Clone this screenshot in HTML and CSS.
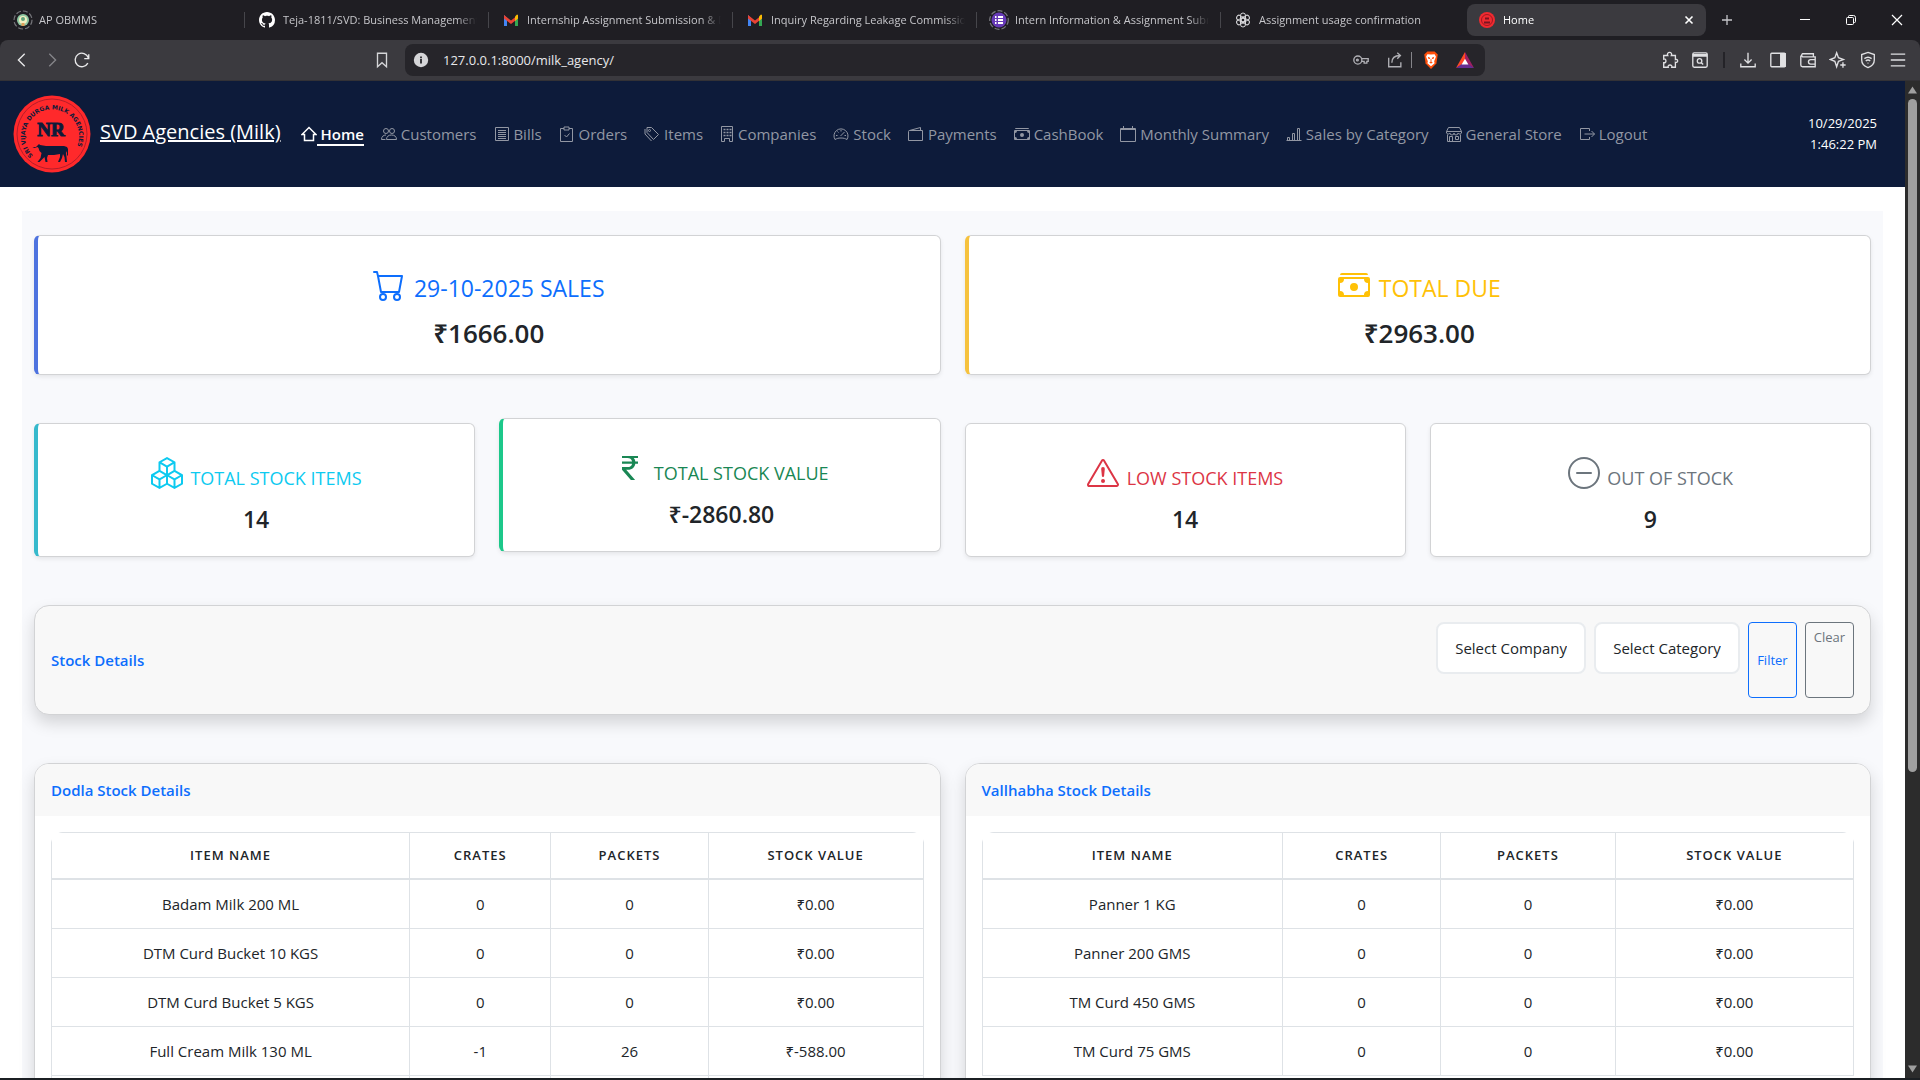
FILE: index.html
```html
<!DOCTYPE html>
<html lang="en">
<head>
<meta charset="utf-8">
<meta name="viewport" content="width=device-width, initial-scale=1">
<title>Home</title>
<link rel="stylesheet" href="styles.css">
</head>
<body>
<div class="tabstrip">
  <div class="tab">
    <svg class="favicon" viewBox="0 0 20 20"><circle cx="10" cy="10" r="9" fill="none" stroke="#77777c" stroke-width="1.2" stroke-dasharray="5 2"/><circle cx="10" cy="10" r="6" fill="#8fc9a3"/><circle cx="10" cy="10" r="4" fill="#f3efc0"/><circle cx="10" cy="9" r="2" fill="#5da37b"/><path d="M8.500 13h3v3h-3z" fill="#e0a05a"/></svg>
    <span class="tab-title">AP OBMMS</span>
  </div>
  <div class="tab">
    <svg class="favicon" viewBox="-2 -2 20 20"><path fill="#fff" d="M8 0C3.58 0 0 3.58 0 8c0 3.540 2.290 6.530 5.470 7.590.4.07.55-.17.55-.38 0-.19-.01-.82-.01-1.490-2.010.37-2.530-.49-2.690-.94-.09-.23-.48-.94-.82-1.130-.28-.15-.68-.52-.01-.53.63-.01 1.080.58 1.230.82.72 1.210 1.870.87 2.330.66.07-.52.28-.87.51-1.070-1.780-.2-3.640-.89-3.640-3.950 0-.87.31-1.590.82-2.150-.08-.2-.36-1.020.08-2.120 0 0 .67-.21 2.200.82.64-.18 1.320-.27 2-.27s1.360.09 2 .27c1.530-1.040 2.200-.82 2.200-.82.44 1.100.16 1.920.08 2.120.51.56.82 1.270.82 2.150 0 3.070-1.870 3.750-3.650 3.950.29.25.54.73.54 1.480 0 1.070-.01 1.930-.01 2.200 0 .21.15.46.55.38A8.010 8.010 0 0 0 16 8c0-4.420-3.580-8-8-8"/></svg>
    <span class="tab-title">Teja-1811/SVD: Business Management System</span>
  </div>
  <div class="tab">
    <svg class="favicon" viewBox="0 0 20 20"><path d="M3 5v11h3V8z" fill="#4285f4"/><path d="M17 5v11h-3V8z" fill="#34a853"/><path d="M3 5l7 5.500L17 5v3.500l-7 5.500-7-5.500z" fill="#ea4335"/><path d="M14 6.500 16 4.500l1 .5v3.500L14 11z" fill="#fbbc04"/></svg>
    <span class="tab-title">Internship Assignment Submission &amp; Details</span>
  </div>
  <div class="tab">
    <svg class="favicon" viewBox="0 0 20 20"><path d="M3 5v11h3V8z" fill="#4285f4"/><path d="M17 5v11h-3V8z" fill="#34a853"/><path d="M3 5l7 5.500L17 5v3.500l-7 5.500-7-5.500z" fill="#ea4335"/><path d="M14 6.500 16 4.500l1 .5v3.500L14 11z" fill="#fbbc04"/></svg>
    <span class="tab-title">Inquiry Regarding Leakage Commission</span>
  </div>
  <div class="tab">
    <svg class="favicon" viewBox="0 0 20 20"><circle cx="10" cy="10" r="9.300" fill="none" stroke="#77777c" stroke-width="1.200" stroke-dasharray="5 2"/><circle cx="10" cy="10" r="7.500" fill="#673ab7"/><path d="M6 7h1.500M9 7h5M6 10h1.500M9 10h5M6 13h1.500M9 13h5" stroke="#fff" stroke-width="1.800"/></svg>
    <span class="tab-title">Intern Information &amp; Assignment Submission</span>
  </div>
  <div class="tab">
    <svg class="favicon" viewBox="0 0 20 20" fill="none" stroke="#d5d5d8" stroke-width="1"><rect x="7.500" y="3" width="5" height="9" rx="2.500"/><rect x="7.500" y="3" width="5" height="9" rx="2.500" transform="rotate(60 10 10)"/><rect x="7.500" y="3" width="5" height="9" rx="2.500" transform="rotate(120 10 10)"/><rect x="7.500" y="3" width="5" height="9" rx="2.500" transform="rotate(180 10 10)"/><rect x="7.500" y="3" width="5" height="9" rx="2.500" transform="rotate(240 10 10)"/><rect x="7.500" y="3" width="5" height="9" rx="2.500" transform="rotate(300 10 10)"/></svg>
    <span class="tab-title">Assignment usage confirmation</span>
  </div>
  <div class="tab tab-active">
    <svg class="favicon" viewBox="0 0 20 20"><circle cx="10" cy="10" r="8" fill="#f02a30"/><circle cx="10" cy="10" r="5.500" fill="none" stroke="#a01822" stroke-width="1"/><path d="M8 7.500h4v2H8zM7 11.500h6v2H7z" fill="#7a1420"/></svg>
    <span class="tab-title">Home</span>
    <button class="icon-button tab-close" type="button" aria-label="Close tab"><svg viewBox="0 0 10 10"><path d="M1.500 1.500l7 7M8.500 1.500l-7 7" stroke="currentColor" stroke-width="1.600"/></svg></button>
  </div>
  <button class="icon-button tab-new" type="button" aria-label="New tab"><svg viewBox="0 0 12 12"><path d="M6 1v10M1 6h10" stroke="currentColor" stroke-width="1.300"/></svg></button>
  <div class="window-controls">
    <button class="icon-button" type="button" aria-label="Minimise"><svg viewBox="0 0 12 12"><path d="M1 5.500h10" stroke="currentColor"/></svg></button>
    <button class="icon-button" type="button" aria-label="Restore"><svg viewBox="0 0 12 12" fill="none" stroke="currentColor"><rect x="1.500" y="3.500" width="7" height="7" rx="1"/><path d="M3.500 3.500v-1a1 1 0 0 1 1-1h4a2 2 0 0 1 2 2v4a1 1 0 0 1-1 1h-1"/></svg></button>
    <button class="icon-button" type="button" aria-label="Close window"><svg viewBox="0 0 12 12"><path d="M1 1l10 10M11 1L1 11" stroke="currentColor" stroke-width="1.200"/></svg></button>
  </div>
</div>

<div class="toolbar">
  <div class="toolbar-nav">
    <button class="icon-button" type="button" aria-label="Back"><svg viewBox="0 0 20 20"><path d="M13 3 6 10l7 7" stroke="#e8e8ea"/></svg></button>
    <button class="icon-button" type="button" aria-label="Forward"><svg viewBox="0 0 20 20"><path d="M7 3l7 7-7 7" stroke="#85858a"/></svg></button>
    <button class="icon-button" type="button" aria-label="Reload"><svg viewBox="0 0 20 20"><path d="M16.500 13.500A7.500 7.500 0 1 1 17 7.500M17.500 3.500v5h-5" stroke="#e8e8ea"/></svg></button>
  </div>
  <button class="icon-button" type="button" aria-label="Bookmark"><svg viewBox="0 0 20 20"><path d="M5 2.500h10v15l-5-4.500-5 4.500z" stroke="#d5d5d8"/></svg></button>
  <div class="address">
    <svg class="solid" viewBox="0 0 20 20"><circle cx="10" cy="10" r="8" fill="#d5d5d8"/><path d="M9 9h2v5H9zM9 6h2v2H9z" fill="#26262b"/></svg>
    <label class="address-label"><span class="sr-only">Address</span><input class="address-input" type="text" value="127.0.0.1:8000/milk_agency/"></label>
    <svg class="address-key" viewBox="0 0 20 20"><circle cx="6.500" cy="10" r="4.500"/><circle cx="6" cy="10" r="1"/><path d="M10.500 8.500h7.500v3h-1.500v2h-3v-2h-3"/></svg>
    <svg class="address-share" viewBox="0 0 20 20"><path d="M3 7.500v10h13.500v-5M6.500 13c0-5 3-8 9-8M12.500 2l3.500 3-3.500 3.500"/></svg>
    <span class="address-separator"></span>
    <svg class="solid" viewBox="0 0 20 20"><path d="M6 .5h8l3.500 3.500-1.500 10-6 6-6-6L2.500 4z" fill="#ff4f0a"/><path d="M10 4l4-.5 1.500 3-2 5 .5 2-4 3.500-4-3.500.5-2-2-5 1.500-3z" fill="#fff"/><path d="M6.500 6.500l2.500 1v1.500l-2-.5zM13.500 6.500l-2.500 1v1.500l2-.5zM9.500 9h1v3l1.500 1-2 1-2-1 1.500-1z" fill="#ff4f0a"/></svg>
    <svg class="solid address-rewards" viewBox="0 0 20 20"><path d="M10 1 0 19l10-6z" fill="#ff4724"/><path d="M10 1l10 18-10-6z" fill="#9e1f63"/><path d="M0 19h20l-10-7z" fill="#662d91"/><path d="M10 8.500l3.800 6.500H6.200z" fill="#fff"/></svg>
  </div>
  <div class="toolbar-actions">
    <button class="icon-button" type="button" aria-label="Extensions"><svg viewBox="0 0 20 20"><path d="M3 5h4.500c-1-2 .3-3.500 2-3.500S12.500 3 11.500 5H16v4.500c1.300-.6 2.500.3 2.500 1.500s-1.200 2.100-2.500 1.500V18h-4c.5-1.500-.5-2.500-2-2.500s-2.500 1-2 2.500H3v-5c1.500.3 2.500-.6 2.500-2S4.500 8.500 3 9z"/></svg></button>
    <button class="icon-button" type="button" aria-label="Search tabs"><svg viewBox="0 0 20 20"><rect x="2" y="2" width="16" height="16" rx="1.500"/><path d="M2 5.500h16M2 4h16"/><circle cx="9.500" cy="11" r="2.500"/><path d="M11.500 13l2 2"/></svg></button>
    <span class="toolbar-separator"></span>
    <button class="icon-button" type="button" aria-label="Downloads"><svg viewBox="0 0 20 20"><path d="M10 2v11M6 9.500l4 4 4-4M2 14v3.500h16V14"/></svg></button>
    <button class="icon-button" type="button" aria-label="Sidebar"><svg viewBox="0 0 20 20"><rect x="2" y="2.500" width="16" height="15" rx="1"/><path d="M13 3h5v14h-5z" fill="currentColor"/></svg></button>
    <button class="icon-button" type="button" aria-label="Wallet"><svg viewBox="0 0 20 20"><path d="M16 6V3H4a2 2 0 0 0 0 3.500h14v11H4a2 2 0 0 1-2-2V5M18 9.500h-5a2.500 2.500 0 0 0 0 5h5"/></svg></button>
    <button class="icon-button" type="button" aria-label="Assistant"><svg viewBox="0 0 20 20"><path d="M8.500 2l2 5.500 5.500 2-5.500 2-2 6-2-6-5-2 5-2zM15.500 12.500v6M12.500 15.500h6"/></svg></button>
    <button class="icon-button" type="button" aria-label="VPN"><svg viewBox="0 0 20 20"><path d="M10 1.500l7 2.500v6c0 4-3 7-7 8.500C6 17 3 14 3 10V4zM6 8.500c2.500-2 5.500-2 8 0M7.500 11c1.500-1.300 3.500-1.300 5 0M9.500 13.500h1"/></svg></button>
    <button class="icon-button" type="button" aria-label="Menu"><svg viewBox="0 0 20 20"><path d="M2 3.500h16M2 10h16M2 16.500h16"/></svg></button>
  </div>
</div>

<div class="viewport">
<div class="page">
  <header class="navbar">
    <a class="brand" href="#home">
      <svg class="logo" viewBox="0 0 78 78" aria-hidden="true">
        <defs><path id="ring-text" d="M20 60.500A27 27 0 1 1 58.500 60"/></defs>
        <circle cx="39" cy="39" r="38.500" fill="#ff292b"/>
        <circle cx="39" cy="39" r="35" fill="none" stroke="#b51d2a" stroke-width="1"/>
        <text class="logo-ring"><textPath href="#ring-text">SRI VIJAYA DURGA MILK AGENCIES</textPath></text>
        <text class="logo-mark" x="38" y="41" text-anchor="middle">NR</text>
        <path fill="#0d1b3a" d="M23 52l2-2 1-1 1 1 3 .5 3 .5h18l3 1 1 2v7l-1-1v-4l-1 2 .5 4 .5 5h-2l-.5-5-1.500-3-1 4-2 4h-2l2-5v-3l-6 1h-6l-1 3 .5 4h-2l-1-5-2 2-3 3h-2l3-4 1-5-2-2-1-3-1-1-3 1-2-1z"/>
      </svg>
      <span class="brand-name">SVD Agencies (Milk)</span>
    </a>
    <nav class="nav-links">
      <a class="nav-link nav-active" href="#home"><svg viewBox="0 0 16 16"><path d="M1 8.500 8 1.500l7 7h-2.500v6h-9v-6z"/></svg><span class="nav-text">&nbsp;Home</span></a>
      <a class="nav-link" href="#customers"><svg viewBox="0 0 16 16"><circle cx="5" cy="5" r="2.500"/><circle cx="11" cy="5" r="2.500"/><path d="M.5 13.500c0-3 2-4.500 4.500-4.500M.5 13.500h4M5.500 13.500c0-3 2-4.500 5-4.500s5 1.500 5 4.500z"/></svg><span class="nav-text">&nbsp;Customers</span></a>
      <a class="nav-link" href="#bills"><svg viewBox="0 0 16 16"><path d="M1.500 1.500h13v13h-13zM4 4.500h8M4 6.500h8M4 8.500h8M4 10.500h8M4 12.500h8"/></svg><span class="nav-text">&nbsp;Bills</span></a>
      <a class="nav-link" href="#orders"><svg viewBox="0 0 16 16"><path d="M5 2.500H1.500v13h12v-13H10M5 1h5v3H5zM5.500 9l2 2 3-3.500"/></svg><span class="nav-text">&nbsp;Orders</span></a>
      <a class="nav-link" href="#items"><svg viewBox="0 0 16 16"><path d="M3 1.500h4.500l7 7-5 5-6.500-7zM1 3v5l6.500 7"/><circle cx="5.500" cy="4.500" r="1"/></svg><span class="nav-text">&nbsp;Items</span></a>
      <a class="nav-link" href="#companies"><svg class="nav-narrow" viewBox="0 0 14 16"><path d="M1.500.5h11v15h-3v-3h-5v3h-3z"/><path stroke-dasharray="2 1" d="M3.500 3.500h8M3.500 6.500h8M3.500 9.500h8" stroke-width="1.600"/></svg><span class="nav-text">&nbsp;Companies</span></a>
      <a class="nav-link" href="#stock"><svg viewBox="0 0 16 16"><path d="M2 13.500A7 7 0 1 1 14 13.500c-2-1-3-1.500-6-1.500s-4 .5-6 1.500zM8 4v1.500M4.500 5.500l1 1M3 9.500h1.500M11.500 9.500H13M7.500 10l4-4"/></svg><span class="nav-text">&nbsp;Stock</span></a>
      <a class="nav-link" href="#payments"><svg viewBox="0 0 16 16"><path d="M1.500 4.500h13v10H.500v-9a1 1 0 0 1 1-1L12.500 1.500v3"/></svg><span class="nav-text">&nbsp;Payments</span></a>
      <a class="nav-link" href="#cashbook"><svg class="filled" viewBox="0 0 16 16"><path d="M1 3a1 1 0 0 1 1-1h12a1 1 0 0 1 1 1zm7 8a2 2 0 1 0 0-4 2 2 0 0 0 0 4"/><path d="M0 5a1 1 0 0 1 1-1h14a1 1 0 0 1 1 1v8a1 1 0 0 1-1 1H1a1 1 0 0 1-1-1zm3 0a2 2 0 0 1-2 2v4a2 2 0 0 1 2 2h10a2 2 0 0 1 2-2V7a2 2 0 0 1-2-2z"/></svg><span class="nav-text">&nbsp;CashBook</span></a>
      <a class="nav-link" href="#monthly"><svg viewBox="0 0 16 16"><path d="M.5 2.500h15v13H.500zM.5 3.500h15M3.500 0v2M12.500 0v2"/></svg><span class="nav-text">&nbsp;Monthly Summary</span></a>
      <a class="nav-link" href="#sales"><svg viewBox="0 0 16 16"><path d="M1.500 11.500h2v3h-2zM6.500 7.500h2v7h-2zM11.500 2.500h2v12h-2zM.5 14.500h15"/></svg><span class="nav-text">&nbsp;Sales by Category</span></a>
      <a class="nav-link" href="#general"><svg viewBox="0 0 16 16"><path d="M2.500 1.500h11l2 4v1.500a2 2 0 0 1-3.500 0 2 2 0 0 1-4 0 2 2 0 0 1-4 0 2 2 0 0 1-3.500 0V5.500zM.5 5.500h15M1.500 8.500v7h13v-7M3.500 15.500v-5h3v5M9.500 10.500h3v3h-3z"/></svg><span class="nav-text">&nbsp;General Store</span></a>
      <a class="nav-link" href="#logout"><svg viewBox="0 0 16 16"><path d="M10.500 5V2.500h-9v11h9V11M5.500 8h10M12.500 5l3 3-3 3"/></svg><span class="nav-text">&nbsp;Logout</span></a>
    </nav>
    <div class="clock"><span>10/29/2025</span><span>1:46:22 PM</span></div>
  </header>

  <main class="dashboard">
    <section class="stats stats-two">
      <article class="stat stat-large edge-blue">
        <h2 class="stat-title tone-blue"><svg viewBox="0 0 16 16"><path d="M0 1.500A.5.5 0 0 1 .5 1H2a.5.5 0 0 1 .485.379L2.890 3H14.500a.5.5 0 0 1 .491.592l-1.500 8A.5.5 0 0 1 13 12H4a.5.5 0 0 1-.491-.408L2.010 3.607 1.610 2H.5a.5.5 0 0 1-.5-.5M3.102 4l1.313 7h8.170l1.313-7zM5 12a2 2 0 1 0 0 4 2 2 0 0 0 0-4m7 0a2 2 0 1 0 0 4 2 2 0 0 0 0-4m-7 1a1 1 0 1 1 0 2 1 1 0 0 1 0-2m7 0a1 1 0 1 1 0 2 1 1 0 0 1 0-2"/></svg> 29-10-2025 SALES</h2>
        <p class="stat-value">₹1666.00</p>
      </article>
      <article class="stat stat-large edge-yellow">
        <h2 class="stat-title tone-yellow"><svg viewBox="0 0 16 16"><path d="M1 3a1 1 0 0 1 1-1h12a1 1 0 0 1 1 1zm7 8a2 2 0 1 0 0-4 2 2 0 0 0 0 4"/><path d="M0 5a1 1 0 0 1 1-1h14a1 1 0 0 1 1 1v8a1 1 0 0 1-1 1H1a1 1 0 0 1-1-1zm3 0a2 2 0 0 1-2 2v4a2 2 0 0 1 2 2h10a2 2 0 0 1 2-2V7a2 2 0 0 1-2-2z"/></svg> TOTAL DUE</h2>
        <p class="stat-value">₹2963.00</p>
      </article>
    </section>

    <section class="stats stats-four">
      <article class="stat edge-cyan">
        <h2 class="stat-title tone-cyan"><svg viewBox="0 0 16 16"><path d="M7.752.066a.5.5 0 0 1 .496 0l3.750 2.143a.5.5 0 0 1 .252.434v3.995l3.498 2A.5.5 0 0 1 16 9.070v4.286a.5.5 0 0 1-.252.434l-3.750 2.143a.5.5 0 0 1-.496 0l-3.502-2-3.502 2.001a.5.5 0 0 1-.496 0l-3.750-2.143A.5.5 0 0 1 0 13.357V9.071a.5.5 0 0 1 .252-.434L3.750 6.638V2.643a.5.5 0 0 1 .252-.434zM4.250 7.504 1.508 9.071l2.742 1.567 2.742-1.567zM7.500 9.933l-2.750 1.571v3.134l2.750-1.571zm1 3.134 2.750 1.571v-3.134L8.500 9.933zm.508-3.996 2.742 1.567 2.742-1.567-2.742-1.567zm2.242-2.433V3.504L8.500 5.076V8.210zM7.500 8.210V5.076L4.750 3.504v3.134zM5.258 2.643 8 4.210l2.742-1.567L8 1.076zM15 9.933l-2.750 1.571v3.134L15 13.067zM3.750 14.638v-3.134L1 9.933v3.134z"/></svg> TOTAL STOCK ITEMS</h2>
        <p class="stat-value">14</p>
      </article>
      <article class="stat stat-raised edge-green">
        <h2 class="stat-title tone-green"><svg viewBox="0 0 16 16"><path d="M4 3.060h2.726c1.220 0 2.120.575 2.325 1.724H4v1.051h5.051C8.855 7.001 8 7.558 6.788 7.558H4v1.317L8.437 14h2.110L6.095 8.884h.855c2.316-.018 3.465-1.476 3.688-3.049H12V4.784h-1.345c-.08-.778-.357-1.335-.793-1.732H12V2H4z"/></svg> TOTAL STOCK VALUE</h2>
        <p class="stat-value">₹-2860.80</p>
      </article>
      <article class="stat">
        <h2 class="stat-title tone-red"><svg viewBox="0 0 16 16"><path d="M7.938 2.016A.13.13 0 0 1 8.002 2a.13.13 0 0 1 .063.016.15.15 0 0 1 .054.057l6.857 11.667c.036.06.035.124.002.183a.2.2 0 0 1-.054.06.1.1 0 0 1-.066.017H1.146a.1.1 0 0 1-.066-.017.2.2 0 0 1-.054-.06.18.18 0 0 1 .002-.183L7.884 2.073a.15.15 0 0 1 .054-.057m1.044-.45a1.130 1.130 0 0 0-1.960 0L.165 13.233c-.457.778.091 1.767.98 1.767h13.713c.889 0 1.438-.99.98-1.767z"/><path d="M7.002 12a1 1 0 1 1 2 0 1 1 0 0 1-2 0M7.100 5.995a.905.905 0 1 1 1.800 0l-.35 3.507a.552.552 0 0 1-1.100 0z"/></svg> LOW STOCK ITEMS</h2>
        <p class="stat-value">14</p>
      </article>
      <article class="stat">
        <h2 class="stat-title tone-grey"><svg viewBox="0 0 16 16"><path d="M8 15A7 7 0 1 1 8 1a7 7 0 0 1 0 14m0 1A8 8 0 1 0 8 0a8 8 0 0 0 0 16"/><path d="M4 8a.5.5 0 0 1 .5-.5h7a.5.5 0 0 1 0 1h-7A.5.5 0 0 1 4 8"/></svg> OUT OF STOCK</h2>
        <p class="stat-value">9</p>
      </article>
    </section>

    <section class="panel filter-panel">
      <h2 class="panel-title">Stock Details</h2>
      <form class="filters">
        <select class="filter-select" aria-label="Company"><option>Select Company</option></select>
        <select class="filter-select" aria-label="Category"><option>Select Category</option></select>
        <button class="filter-button" type="button">Filter</button>
        <a class="clear-button" href="#clear">Clear</a>
      </form>
    </section>

    <section class="stock-tables">
      <article class="panel">
        <header class="panel-header"><h2 class="panel-title">Dodla Stock Details</h2></header>
        <div class="table-frame">
          <table class="stock-table dodla">
            <colgroup><col class="col-name"><col class="col-crates"><col class="col-packets"><col class="col-value"></colgroup>
            <thead><tr><th scope="col">Item Name</th><th scope="col">Crates</th><th scope="col">Packets</th><th scope="col">Stock Value</th></tr></thead>
            <tbody>
              <tr><td>Badam Milk 200 ML</td><td>0</td><td>0</td><td>₹0.00</td></tr>
              <tr><td>DTM Curd Bucket 10 KGS</td><td>0</td><td>0</td><td>₹0.00</td></tr>
              <tr><td>DTM Curd Bucket 5 KGS</td><td>0</td><td>0</td><td>₹0.00</td></tr>
              <tr><td>Full Cream Milk 130 ML</td><td>-1</td><td>26</td><td>₹-588.00</td></tr>
              <tr><td></td><td></td><td></td><td></td></tr>
            </tbody>
          </table>
        </div>
      </article>
      <article class="panel">
        <header class="panel-header"><h2 class="panel-title">Vallhabha Stock Details</h2></header>
        <div class="table-frame">
          <table class="stock-table vallhabha">
            <colgroup><col class="col-name"><col class="col-crates"><col class="col-packets"><col class="col-value"></colgroup>
            <thead><tr><th scope="col">Item Name</th><th scope="col">Crates</th><th scope="col">Packets</th><th scope="col">Stock Value</th></tr></thead>
            <tbody>
              <tr><td>Panner 1 KG</td><td>0</td><td>0</td><td>₹0.00</td></tr>
              <tr><td>Panner 200 GMS</td><td>0</td><td>0</td><td>₹0.00</td></tr>
              <tr><td>TM Curd 450 GMS</td><td>0</td><td>0</td><td>₹0.00</td></tr>
              <tr><td>TM Curd 75 GMS</td><td>0</td><td>0</td><td>₹0.00</td></tr>
            </tbody>
          </table>
        </div>
      </article>
    </section>
  </main>
</div>
<div class="scrollbar" aria-hidden="true">
  <svg viewBox="0 0 10 8"><path d="M5 0l5 8H0z"/></svg>
  <span class="scroll-track"><span class="scroll-thumb"></span></span>
  <svg viewBox="0 0 10 8"><path d="M5 8l5-8H0z"/></svg>
</div>
</div>
</body>
</html>
```
FILE: styles.css
```css
*, *::before, *::after { box-sizing: border-box; }

body {
  margin: 0;
  height: 100vh;
  overflow: hidden;
  display: flex;
  flex-direction: column;
  font-family: "Open Sans", "Noto Sans", sans-serif;
  font-size: 15px;
  line-height: 24px;
  color: #212529;
  background: #fff;
  border-bottom: 2px solid #1b1f23;
}

h2, p { margin: 0; }
svg { flex: none; }

.sr-only {
  position: absolute;
  width: 1px;
  height: 1px;
  overflow: hidden;
  clip-path: inset(50%);
}

.icon-button {
  display: inline-flex;
  align-items: center;
  justify-content: center;
  padding: 0;
  border: 0;
  background: none;
  color: inherit;
}

/* Tab strip */
.tabstrip {
  flex: none;
  display: flex;
  align-items: center;
  height: 40px;
  padding-left: 1px;
  background: #1f1e23;
  color: #fff;
}
.tab {
  display: flex;
  align-items: center;
  flex: 0 1 244px;
  min-width: 0;
  height: 32px;
  padding: 0 12px;
  gap: 6px;
  font-size: 11px;
  color: #c6c6ca;
  background: linear-gradient(#46464b, #46464b) right center / 1px 16px no-repeat;
}
.tab:nth-child(6) { background: none; }
.favicon { width: 20px; height: 20px; }
.tab-title {
  flex: 1;
  overflow: hidden;
  white-space: nowrap;
  mask-image: linear-gradient(to right, #000 calc(100% - 20px), transparent);
}
.tab-active {
  flex-basis: 239px;
  margin-left: 2px;
  padding-left: 10px;
  background: #3b3a3f;
  border-radius: 8px;
  color: #fff;
}
.tab-close { width: 10px; }
.tab-close svg { width: 10px; height: 10px; }
.tab-new { width: 42px; color: #c6c6ca; }
.tab-new svg { width: 12px; height: 12px; }
.window-controls { display: flex; margin-left: auto; }
.window-controls .icon-button { width: 46px; height: 32px; }
.window-controls svg { width: 12px; height: 12px; }

/* Toolbar */
.toolbar {
  flex: none;
  display: flex;
  align-items: center;
  height: 41px;
  padding: 0 7px;
  background: #3b3a3f;
  border-bottom: 1px solid #333236;
  border-radius: 8px 8px 0 0;
  box-shadow: 0 -8px 0 #1f1e23;
  clip-path: inset(0);
  color: #e0e0e3;
}
.toolbar svg {
  width: 18px;
  height: 18px;
  fill: none;
  stroke: currentColor;
  stroke-width: 1.5;
}
.toolbar .icon-button { width: 30px; height: 30px; }
.toolbar-nav { display: flex; width: 360px; }
.address {
  display: flex;
  align-items: center;
  flex: 0 1 1080px;
  height: 32px;
  margin-left: 8px;
  padding: 0 11px 0 7px;
  background: #26252a;
  border-radius: 8px;
  color: #b0b0b5;
}
.address .solid { stroke: none; }
.address-label { flex: 1; display: flex; margin-left: 13px; }
.address-input {
  width: 100%;
  padding: 0;
  border: 0;
  background: none;
  font: 13px/20px "Open Sans", "Noto Sans", sans-serif;
  color: #e8e8ea;
}
.address-share { margin-left: 16px; }
.address-separator { width: 1px; height: 16px; margin: 0 10px 0 7px; background: #85858a; }
.address-rewards { margin-left: 16px; }
.toolbar-actions { display: flex; align-items: center; margin-left: auto; }
.toolbar-separator { width: 2px; height: 16px; margin: 0 8px; background: #242328; }

/* Page viewport and its scroll bar */
.viewport { flex: 1; min-height: 0; display: flex; }
.page { flex: 1; min-width: 0; overflow: hidden; }
.scrollbar {
  flex: none;
  display: flex;
  flex-direction: column;
  align-items: center;
  width: 15px;
  padding: 5px 0;
  gap: 5px;
  background: #2c2c2c;
}
.scrollbar svg { width: 9px; height: 8px; fill: #9f9f9f; }
.scroll-track { flex: 1; width: 9px; }
.scroll-thumb { display: block; height: 70%; border-radius: 5px; background: #9f9f9f; }

/* Site header */
.navbar {
  display: flex;
  align-items: center;
  min-height: 106px;
  padding: 0 28px 0 13px;
  background: #0d1b3a;
  white-space: nowrap;
}
.brand {
  display: flex;
  align-items: center;
  gap: 9px;
  font-size: 20px;
  color: #fff;
}
.brand-name { padding-bottom: 4px; }
.logo { width: 78px; height: 78px; }
.logo-ring { font: bold 6px "DejaVu Sans", sans-serif; fill: #0d1b3a; }
.logo-mark { font: bold 19px "Liberation Serif", serif; fill: #0d1b3a; stroke: #0d1b3a; stroke-width: 1px; }
.nav-links { display: flex; gap: 17px; margin-left: 20px; }
.nav-link {
  display: flex;
  align-items: center;
  color: #9297a3;
  text-decoration: none;
}
.nav-link svg { width: 16px; height: 16px; fill: none; stroke: currentColor; }
.nav-link .nav-narrow { width: 14px; }
.nav-link .filled { fill: currentColor; stroke: none; }
.nav-active { color: #fff; font-weight: 600; }
.nav-active svg { stroke-width: 1.5; }
.nav-active .nav-text { box-shadow: 0 2px 0 #fff; line-height: 20px; }
.clock {
  display: flex;
  flex-direction: column;
  align-items: flex-end;
  margin-left: auto;
  font-size: 13px;
  line-height: 21px;
  color: #fff;
}

/* Dashboard */
.dashboard {
  display: grid;
  grid-template-columns: minmax(0, 1fr);
  gap: 48px;
  margin: 24px 22px 0;
  padding: 24px 12px;
  background: #f8f9fc;
}
.stats { display: grid; gap: 24px; }
.stats-two { grid-template-columns: repeat(2, 1fr); }
.stats-four { grid-template-columns: repeat(4, 1fr); }
.stat {
  display: flex;
  flex-direction: column;
  align-items: center;
  padding: 33px 16px 17px;
  background: #fff;
  border: 1px solid #d2d3d5;
  border-radius: 6px;
  box-shadow: 0 2px 4px rgba(0, 0, 0, .08);
}
.stat-title { font-weight: 400; font-size: 18px; line-height: 42px; }
.stat-title svg {
  width: 32px;
  height: 32px;
  margin-right: 3px;
  vertical-align: -4px;
  fill: currentColor;
}
.stat-value { font-weight: 600; font-size: 23px; line-height: 40px; }
.stat-large { padding: 32px 16px 16px; }
.stat-large .stat-title { font-size: 23px; line-height: 40px; }
.stat-large .stat-value { font-size: 26px; line-height: 50px; }
.stat-raised { transform: translateY(-5px); }

.edge-blue { border-left: 4px solid #4e73df; }
.edge-yellow { border-left: 4px solid #f6c23e; }
.edge-cyan { border-left: 4px solid #36b9cc; }
.edge-green { border-left: 4px solid #1cc88a; }
.tone-blue { color: #0d6efd; }
.tone-yellow { color: #ffc107; }
.tone-cyan { color: #0dcaf0; }
.tone-green { color: #198754; }
.tone-red { color: #dc3545; }
.tone-grey { color: #6c757d; }

/* Panels */
.panel {
  background: #fff;
  border: 1px solid #d2d3d5;
  border-radius: 15px;
  box-shadow: 0 8px 16px rgba(0, 0, 0, .15);
}
.panel-title { font-size: 15px; font-weight: 600; line-height: 20px; color: #0d6efd; }
.filter-panel {
  display: flex;
  align-items: center;
  justify-content: space-between;
  padding: 16px;
  background: #f8f8f8;
}
.filters { display: flex; gap: 8px; }
.filter-select {
  appearance: none;
  height: 52px;
  margin-bottom: 24px;
  padding: 0 17px;
  border: 2px solid #e9ecef;
  border-radius: 8px;
  background: #fff;
  font: inherit;
  color: #212529;
}
.filter-button, .clear-button {
  padding: 4px 8px;
  border: 1px solid;
  border-radius: 4px;
  background: none;
  font: inherit;
  font-size: 13px;
  line-height: 21px;
  text-decoration: none;
}
.filter-button { color: #0d6efd; }
.clear-button { color: #6c757d; }

.stock-tables { display: grid; grid-template-columns: repeat(2, minmax(0, 1fr)); gap: 24px; }
.panel-header {
  padding: 16px;
  background: #f8f8f8;
  border-radius: 14px 14px 0 0;
}
.table-frame { margin: 16px; overflow: hidden; border-radius: 12px 12px 0 0; }
.stock-table {
  width: 100%;
  table-layout: fixed;
  border-collapse: collapse;
  text-align: center;
}
.stock-table th, .stock-table td { border: 1px solid #dee2e6; padding: 12px; }
.stock-table th {
  height: 46px;
  border-bottom-width: 2px;
  font-size: 13px;
  font-weight: 600;
  line-height: 21px;
  letter-spacing: 1px;
  text-transform: uppercase;
}
.stock-table td { height: 49px; }

/* Column widths act as ratios: the table stretches them to its own width */
.dodla .col-name { width: 180px; }
.dodla .col-crates { width: 71px; }
.dodla .col-packets { width: 79px; }
.dodla .col-value { width: 108px; }
.vallhabha .col-name { width: 150px; }
.vallhabha .col-crates { width: 79px; }
.vallhabha .col-packets { width: 87px; }
.vallhabha .col-value { width: 119px; }
```
